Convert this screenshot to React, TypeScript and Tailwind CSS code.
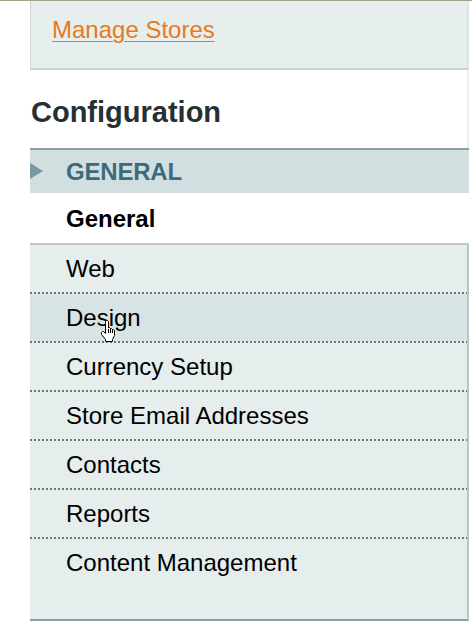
import React from "react";

const items = [
  "Web",
  "Design",
  "Currency Setup",
  "Store Email Addresses",
  "Contacts",
  "Reports",
  "Content Management",
];

function HandCursor() {
  return (
    <svg
      className="absolute left-[70px] top-[26px]"
      width="18"
      height="23"
      viewBox="0 0 18 23"
    >
      <path
        d="M5.5 1.5 L6.5 0.5 L7.5 0.5 L8.5 1.5 L8.5 8 L9.5 7.5 L10.5 8.5 L10.5 9 L11.5 8.5 L12.5 9.5 L12.5 10 L13.5 9.5 L14.5 10.5 L14.5 15.5 L12.5 19.5 L12.5 21.5 L5.5 21.5 L5.5 19.5 L1.5 14.5 L1.5 12.5 L2.5 11.5 L3.5 11.5 L5.5 13.5 Z"
        fill="#fff"
        stroke="#000"
        strokeWidth="1"
        strokeLinejoin="round"
      />
      <path d="M8.5 9 L8.5 13 M10.5 9 L10.5 13 M12.5 10 L12.5 13" stroke="#000" strokeWidth="1" />
    </svg>
  );
}

export default function App() {
  return (
    <div className="w-[472px] h-[623px] overflow-hidden bg-white border-t border-[#a6a486] font-['Liberation_Sans',Arial,sans-serif]">
      <div className="pl-[30px] pr-[3px]">
        {/* Manage stores box */}
        <div className="h-[69px] bg-[#e6eeee] border-l border-[#cfd8d8] border-r-2 border-r-[#dde4e4] border-b-2 border-b-[#cbd5d6] pl-[21px] pt-[15px]">
          <a href="#" className="text-[24px] leading-[28px] text-[#e8791c] underline underline-offset-[3px] decoration-1">
            Manage Stores
          </a>
        </div>

        {/* Configuration title */}
        <div className="pt-[26px] pb-[19px] pl-px border-r-2 border-r-[#eef1f1]">
          <h1 className="text-[29px] leading-[33px] font-bold text-[#253033]">Configuration</h1>
        </div>

        {/* Section header */}
        <div className="relative h-[45px] bg-[#d2dfe0] border-t-2 border-[#8fa0a5] flex items-center">
          <svg className="absolute left-0 top-[13px]" width="13" height="16" viewBox="0 0 13 16">
            <path d="M0 0 L13 8 L0 16 Z" fill="#7a98a0" />
          </svg>
          <span className="pl-[36px] text-[24px] font-bold text-[#3d6b7e] tracking-[-0.2px]">GENERAL</span>
        </div>

        <div className="h-[50px] flex items-center pl-[36px] pt-px">
          <span className="text-[24px] font-bold text-black">General</span>
        </div>

        {/* Items list */}
        <div className="bg-[#e5eded] border-t-2 border-[#c0c8c9] border-r-2 border-r-[#b9c6c7] border-b-2 border-b-[#8d9ea1] pb-[33px]">
          {items.map((label, i) => (
            <div key={label}>
              <div
                className={
                  i === 1
                    ? "relative h-[47px] flex items-center pl-[36px] pt-px bg-[#d7e3e4]"
                    : "relative h-[47px] flex items-center pl-[36px] pt-px"
                }
              >
                <span className="text-[24px] text-black">{label}</span>
                {i === 1 && <HandCursor />}
              </div>
              {i < items.length - 1 && (
                <div className="h-[2px] bg-[repeating-linear-gradient(to_right,#6f7373_0_2px,transparent_2px_4px)]" />
              )}
            </div>
          ))}
        </div>
      </div>
    </div>
  );
}
